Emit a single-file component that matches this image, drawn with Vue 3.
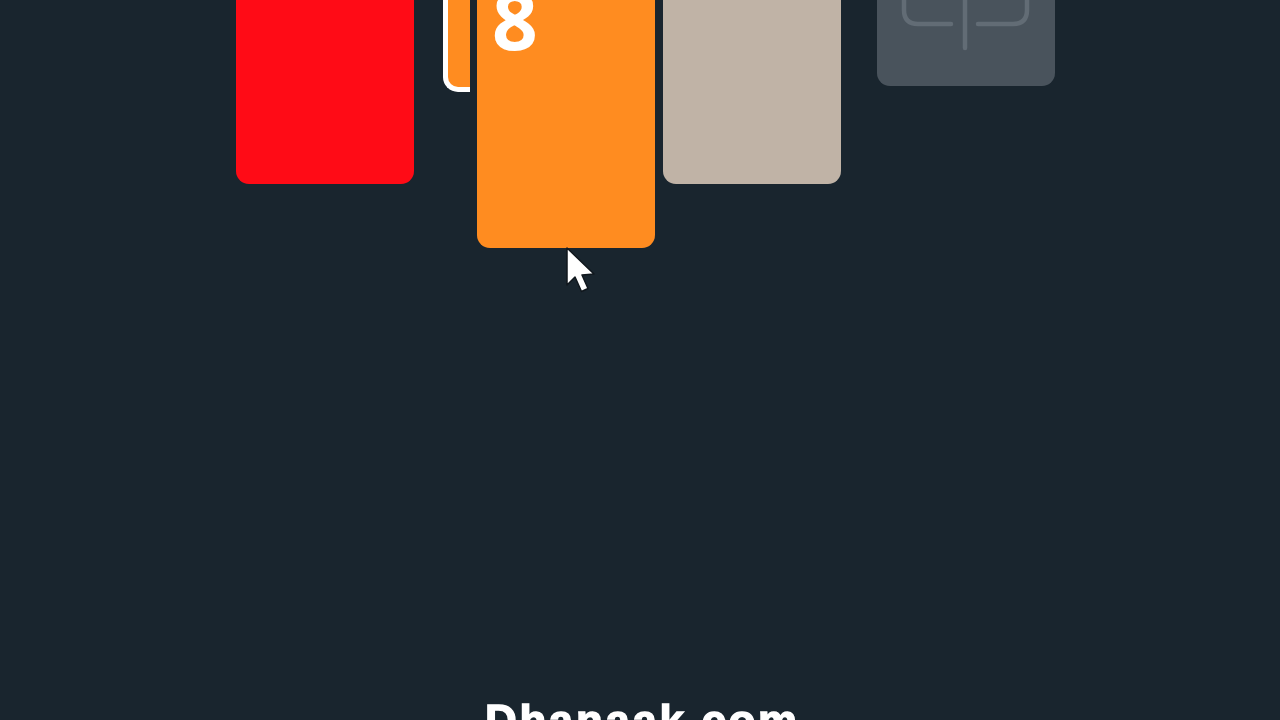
<script setup>
const brand = 'Dhanaak.com'
</script>

<template>
  <div class="screen">
    <div class="row">
      <div class="card red"></div>
      <div class="stub"></div>
      <div class="card orange"><span class="digit">8</span></div>
      <div class="card beige"></div>
      <div class="card gray">
        <svg class="mark" width="178" height="86" viewBox="0 0 178 86" fill="none">
          <path d="M27 -10V10Q27 24 41 24H74" />
          <path d="M150 -10V10Q150 24 136 24H101" />
          <path d="M88 -10V48" />
        </svg>
      </div>
      <svg class="cursor" width="34" height="50" viewBox="0 0 34 50">
        <path d="M3 1V38L11 30L17.500 44.500L24 41.500L18 28L30 27Z" fill="#fff" stroke="#10171d" stroke-width="1.500" stroke-linejoin="round" />
      </svg>
    </div>
    <div class="brand">{{ brand }}</div>
  </div>
</template>

<style scoped>
.screen {
  width: 1280px;
  height: 720px;
  overflow: hidden;
  background: #19252e;
  filter: blur(0.7px);
}
.row {
  position: relative;
  display: flex;
  align-items: flex-start;
  height: 248px;
  padding-left: 236px;
}
.card {
  flex: none;
  width: 178px;
  border-radius: 0 0 13px 13px;
}
.red {
  height: 184px;
  background: #ff0b16;
}
.stub {
  flex: none;
  width: 27px;
  height: 92px;
  margin-left: 29px;
  box-sizing: border-box;
  border: 5px solid #fff;
  border-top: 0;
  border-right: 0;
  border-radius: 0 0 0 15px;
  background: #ff8c20;
}
.orange {
  position: relative;
  height: 248px;
  margin-left: 7px;
  background: #ff8c20;
  overflow: hidden;
}
.digit {
  position: absolute;
  left: 15px;
  top: -31px;
  font: 700 80px/100px "Open Sans", sans-serif;
  color: #fff;
}
.beige {
  height: 184px;
  margin-left: 8px;
  background: #c0b3a6;
}
.gray {
  height: 86px;
  margin-left: 36px;
  background: #49535c;
}
.mark {
  display: block;
}
.mark path {
  stroke: #626c75;
  stroke-width: 4.500;
  stroke-linecap: round;
}
.cursor {
  position: absolute;
  left: 564px;
  top: 247px;
}
.brand {
  margin-top: 443px;
  padding-left: 485px;
  font: 700 44px/60px "Liberation Sans", sans-serif;
  letter-spacing: 2.600px;
  color: #fff;
  -webkit-text-stroke: 1.500px #fff;
  white-space: nowrap;
}
</style>
